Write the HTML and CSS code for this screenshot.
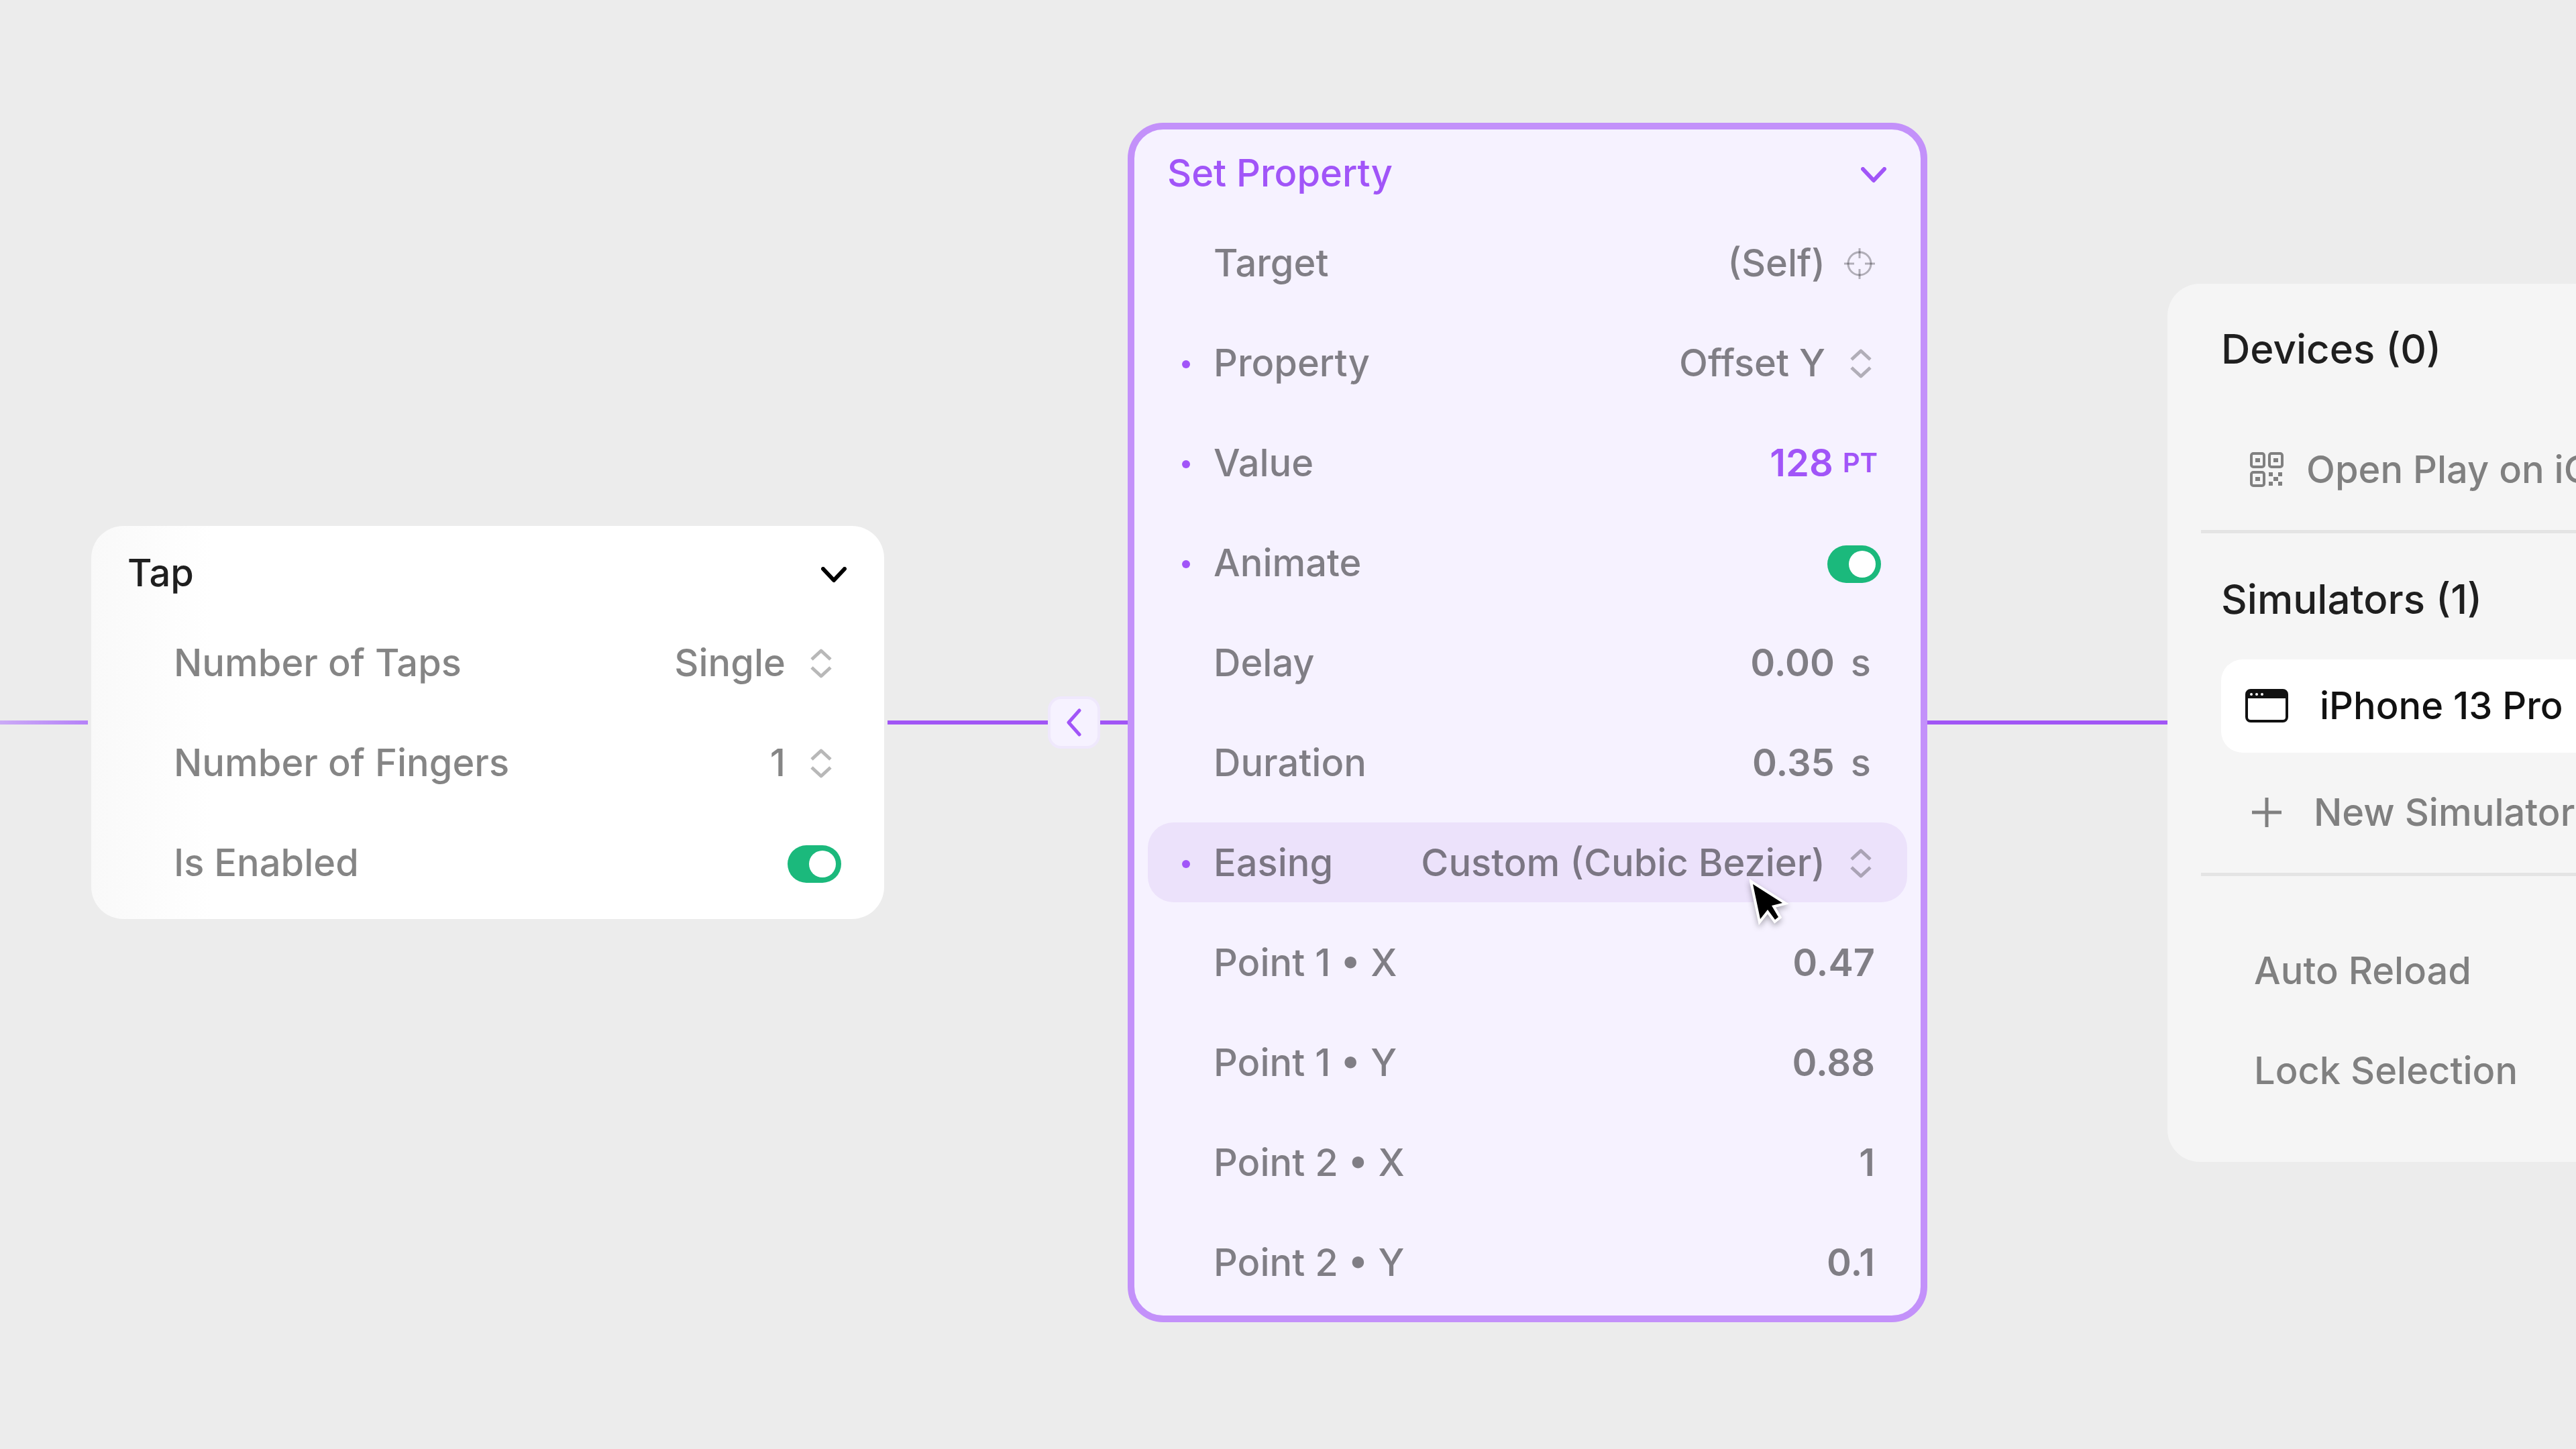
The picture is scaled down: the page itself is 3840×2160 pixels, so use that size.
FILE: index.html
```html
<!DOCTYPE html>
<html lang="en">
<head>
<meta charset="utf-8">
<title>Interaction editor</title>
<link rel="stylesheet" href="styles.css">
</head>
<body>
<svg class="sprite" aria-hidden="true">
  <symbol id="chevron-down" viewBox="0 0 38 24"><path d="M3 3l16 17L35 3" fill="none" stroke="currentColor" stroke-width="6" stroke-linecap="round" stroke-linejoin="round"/></symbol>
  <symbol id="stepper" viewBox="0 0 46 44"><path d="M11 16L25 3l14 13M11 28l14 13 14-13" fill="none" stroke="currentColor" stroke-width="5" stroke-linejoin="round"/></symbol>
</svg>
<main class="canvas">
  <div class="wire wire-in"></div>

  <section class="node node-tap">
    <header class="node-header">
      <h2 class="node-title">Tap</h2>
      <button class="collapse" type="button" aria-label="Collapse Tap"><svg class="chevron"><use href="#chevron-down"/></svg></button>
    </header>
    <div class="rows">
      <div class="row">
        <label class="name" for="taps">Number of Taps</label>
        <select class="value" id="taps"><option>Single</option></select>
        <svg class="trail"><use href="#stepper"/></svg>
      </div>
      <div class="row">
        <label class="name" for="fingers">Number of Fingers</label>
        <select class="value" id="fingers"><option>1</option></select>
        <svg class="trail"><use href="#stepper"/></svg>
      </div>
      <div class="row row-toggle">
        <label class="name" for="enabled">Is Enabled</label>
        <input class="toggle" id="enabled" type="checkbox" checked>
      </div>
    </div>
  </section>

  <div class="wire wire-mid"></div>
  <button class="direction" type="button" aria-label="Reverse"><svg class="direction-icon" viewBox="0 0 22 42"><path d="M19 3L3 21l16 18" fill="none" stroke="currentColor" stroke-width="5" stroke-linecap="round" stroke-linejoin="round"/></svg></button>
  <div class="wire wire-short"></div>

  <section class="node node-selected">
    <header class="node-header">
      <h2 class="node-title">Set Property</h2>
      <button class="collapse" type="button" aria-label="Collapse Set Property"><svg class="chevron"><use href="#chevron-down"/></svg></button>
    </header>
    <div class="rows">
      <div class="row">
        <label class="name" for="target">Target</label>
        <button class="value" id="target" type="button">(Self)</button>
        <svg class="trail trail-target" viewBox="0 0 46 46"><g fill="none" stroke="currentColor" stroke-width="3"><circle cx="23" cy="23" r="17"/><path d="M23 0v15M23 31v15M0 23h15M31 23h15"/></g></svg>
      </div>
      <div class="row row-bound">
        <label class="name" for="property">Property</label>
        <select class="value" id="property"><option>Offset Y</option></select>
        <svg class="trail"><use href="#stepper"/></svg>
      </div>
      <div class="row row-bound row-points">
        <label class="name" for="amount">Value</label>
        <input class="value" id="amount" type="text" value="128">
        <span class="points">PT</span>
      </div>
      <div class="row row-bound row-toggle">
        <label class="name" for="animate">Animate</label>
        <input class="toggle" id="animate" type="checkbox" checked>
      </div>
      <div class="row row-seconds">
        <label class="name" for="delay">Delay</label>
        <input class="value" id="delay" type="text" value="0.00">
        <span class="unit">s</span>
      </div>
      <div class="row row-seconds">
        <label class="name" for="duration">Duration</label>
        <input class="value" id="duration" type="text" value="0.35">
        <span class="unit">s</span>
      </div>
      <div class="row row-bound row-hover">
        <label class="name" for="easing">Easing</label>
        <select class="value" id="easing"><option>Custom (Cubic Bezier)</option></select>
        <svg class="trail"><use href="#stepper"/></svg>
        <svg class="cursor" viewBox="0 0 58 72"><path d="M5 8L49 36 33 40 43 57 38 61 27 46 16 60Z" fill="#000" stroke="#fff" stroke-width="8" paint-order="stroke"/></svg>
      </div>
      <div class="row">
        <label class="name" for="p1x">Point 1 • X</label>
        <input class="value" id="p1x" type="text" value="0.47">
      </div>
      <div class="row">
        <label class="name" for="p1y">Point 1 • Y</label>
        <input class="value" id="p1y" type="text" value="0.88">
      </div>
      <div class="row">
        <label class="name" for="p2x">Point 2 • X</label>
        <input class="value" id="p2x" type="text" value="1">
      </div>
      <div class="row">
        <label class="name" for="p2y">Point 2 • Y</label>
        <input class="value" id="p2y" type="text" value="0.1">
      </div>
    </div>
  </section>

  <div class="wire wire-out"></div>

  <aside class="panel">
    <section class="group group-devices">
      <h2 class="group-title">Devices (0)</h2>
      <button class="item item-open" type="button">
        <span class="slot"><svg class="qr" viewBox="0 0 50 52"><g fill="none" stroke="currentColor" stroke-width="4"><rect x="2" y="2" width="19" height="20" rx="3"/><rect x="29" y="2" width="19" height="20" rx="3"/><rect x="2" y="30" width="19" height="20" rx="3"/></g><path fill="currentColor" d="M8 9h7v6H8zM35 9h7v6h-7zM8 37h7v6H8zM28 30h6v6h-6zM42 30h6v6h-6zM35 37h7v6h-7zM28 44h6v6h-6zM42 44h6v6h-6z"/></svg></span>
        Open Play on iOS
      </button>
    </section>
    <section class="group group-simulators">
      <h2 class="group-title">Simulators (1)</h2>
      <button class="item item-current" type="button">
        <span class="slot"><svg class="window" viewBox="0 0 64 50"><rect x="2" y="2" width="60" height="46" rx="6" fill="none" stroke="currentColor" stroke-width="4"/><path fill="currentColor" d="M2 14V8q0-6 6-6h48q6 0 6 6v6z"/><g fill="#fff"><circle cx="9" cy="8" r="2"/><circle cx="17" cy="8" r="2"/><circle cx="25" cy="8" r="2"/></g></svg></span>
        iPhone 13 Pro
      </button>
      <button class="item item-new" type="button">
        <span class="slot"><svg class="plus" viewBox="0 0 46 46"><path d="M23 1v44M1 23h44" fill="none" stroke="currentColor" stroke-width="5"/></svg></span>
        New Simulator
      </button>
    </section>
    <section class="group group-options">
      <button class="option" type="button">Auto Reload</button>
      <button class="option" type="button">Lock Selection</button>
    </section>
  </aside>
</main>
</body>
</html>
```
FILE: styles.css
```css
* { box-sizing: border-box; }

body {
  margin: 0;
  background: #ececec;
  color: #1f1f1f;
  font: 500 56px/80px Inter, "Liberation Sans", sans-serif;
  font-optical-sizing: none;
}

button, input, select {
  margin: 0;
  padding: 0;
  border: 0;
  background: none;
  color: inherit;
  font: inherit;
  appearance: none;
}

h2 { margin: 0; font: inherit; }
svg { display: block; flex: none; }
.sprite { position: absolute; width: 0; height: 0; }

.canvas {
  display: flex;
  align-items: center;
  min-height: 100vh;
  padding-bottom: 6px;
  overflow: hidden;
  white-space: nowrap;
}

.wire { flex: none; height: 6px; background: #a155f5; }
.wire-in { width: 131px; margin-right: 5px; background: linear-gradient(90deg, #cbaaf6, #b581f8); }
.wire-mid { width: 239px; margin-left: 5px; }
.wire-short { width: 46px; }
.wire-out { width: 363px; }

.direction {
  display: grid;
  flex: none;
  place-items: center;
  width: 78px;
  height: 78px;
  border: 4px solid #efe8fc;
  border-radius: 20px;
  background: #f6f2ff;
  color: #a155f8;
}
.direction-icon { width: 22px; height: 42px; }

.node {
  flex: 0 1 1182px;
  min-width: 0;
  padding: 0 25px 25px;
  border-radius: 48px;
}
.node-tap { background: linear-gradient(90deg, #f9f9f9, #fff 180px); }
.node-selected {
  position: relative;
  background: #f6f2ff;
  outline: 10px solid #c391fa;
  outline-offset: -5px;
}

.node-header {
  display: flex;
  align-items: center;
  justify-content: space-between;
  height: 140px;
  margin-bottom: 4px;
  padding: 0 31px 0 29px;
}
.collapse { color: #000; }
.chevron { width: 38px; height: 24px; margin-top: 6px; }
.node-selected .node-title, .node-selected .collapse { color: #a155f8; }

.rows { display: flex; flex-direction: column; gap: 30px; }
.row {
  display: flex;
  align-items: center;
  height: 119px;
  padding: 0 48px 0 51px;
  border-radius: 38px;
  color: rgba(0, 0, 0, .48);
}
.row::before {
  content: "";
  flex: none;
  width: 12px;
  height: 12px;
  margin: 4px 35px 0 0;
  border-radius: 50%;
}
.row-bound::before { background: #a155f8; }
.row-hover { position: relative; background: #ece2fb; }

.value {
  flex: 1;
  min-width: 0;
  text-align: right;
  text-align-last: right;
}
input.value { font-weight: 600; }
.trail { width: 46px; height: 44px; margin: 2px 0 0 28px; color: rgba(0, 0, 0, .28); }
.trail-target { height: 46px; }

.row-toggle { justify-content: space-between; padding-right: 39px; }
.row-toggle .name { flex: 1; }
.toggle {
  width: 80px;
  height: 56px;
  margin-top: 4px;
  padding: 8px;
  border-radius: 28px;
  background: #1bb97c;
}
.toggle::before {
  content: "";
  display: block;
  width: 40px;
  height: 40px;
  margin-left: auto;
  border-radius: 50%;
  background: #fff;
}

.row-points { padding-right: 44px; }
.row-points .value { color: #a155f8; }
.points { margin-left: 14px; color: #a155f8; font-size: 40px; font-weight: 600; }
.row-seconds { padding-right: 54px; }
.unit { margin-left: 24px; }

.cursor {
  position: absolute;
  top: 84px;
  right: 177px;
  width: 58px;
  height: 72px;
  filter: drop-shadow(0 4px 4px rgba(0, 0, 0, .3));
}

.panel {
  flex: 1;
  min-width: 0;
  padding: 57px 0 76px;
  overflow: hidden;
  border-radius: 48px 0 0 48px;
  background: #f5f5f5;
}
.group { display: flex; flex-direction: column; padding-left: 80px; }
.group + .group::before {
  content: "";
  height: 5px;
  margin-left: -30px;
  background: #e4e4e4;
}
.group-title { font-size: 60px; }
.group-devices { gap: 71px; padding-bottom: 20px; }
.group-simulators { padding-bottom: 20px; }
.group-simulators .group-title { margin: 58px 0 50px; }

.item {
  display: flex;
  align-items: center;
  gap: 47px;
  height: 139px;
  padding-left: 36px;
  color: #808080;
  text-align: left;
}
.item-open { gap: 27px; }
.item-new { gap: 38px; margin-top: 20px; }
.item-current { border-radius: 32px 0 0 32px; background: #fff; color: #111; }
.slot { display: flex; flex: none; justify-content: center; width: 64px; }
.qr { width: 50px; height: 52px; }
.window { width: 64px; height: 50px; }
.plus { width: 46px; height: 46px; }

.option { height: 119px; padding-left: 49px; color: #808080; text-align: left; }
.group-options { gap: 30px; }
.group-options::before { margin-bottom: 52px; }
```
